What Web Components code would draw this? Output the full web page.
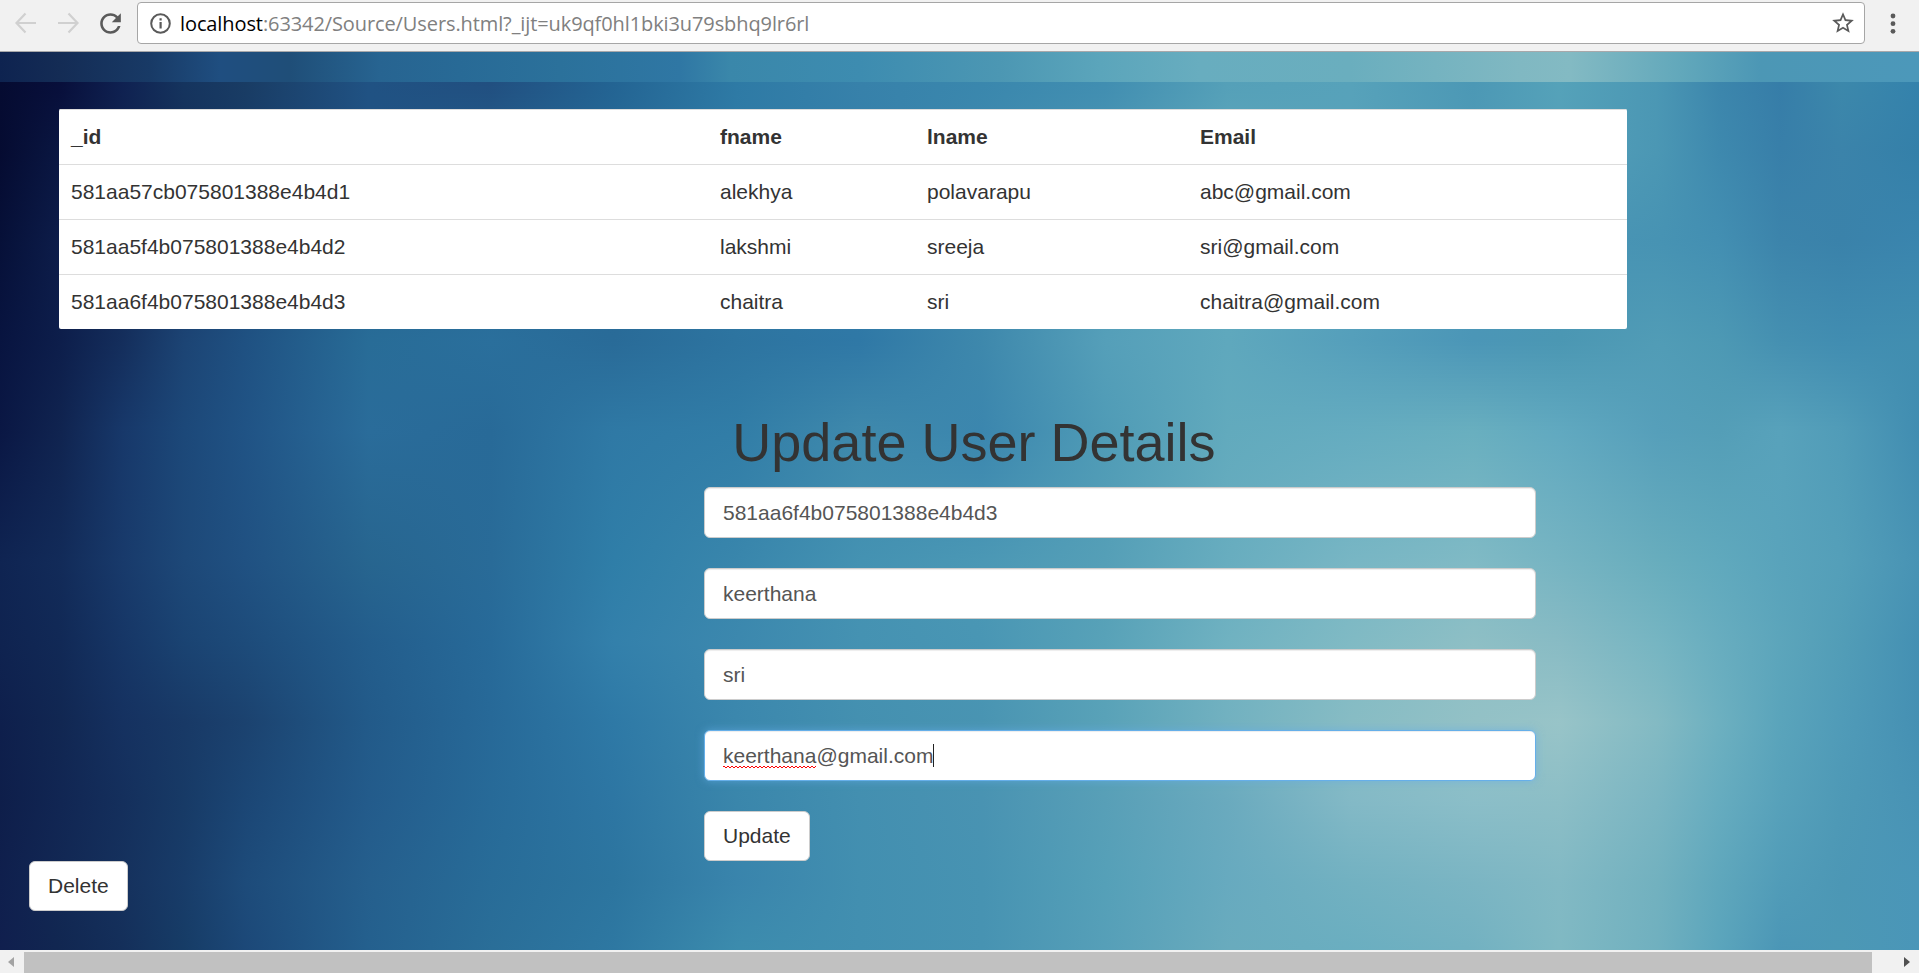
<!DOCTYPE html>
<html lang="en"><head><meta charset="utf-8"><title>Users</title>
<style>
html,body{margin:0;background:#fff;overflow:hidden}
body{font-family:"Liberation Sans",Arial,sans-serif;font-size:21px;line-height:30px;color:#333}
</style></head><body>
<browser-window>
<browser-toolbar slot="toolbar" host="localhost" path=":63342/Source/Users.html?_ijt=uk9qf0hl1bki3u79sbhq9lr6rl"></browser-toolbar>
<users-page>
<user-table></user-table>
<update-form heading="Update User Details">
<text-field>581aa6f4b075801388e4b4d3</text-field>
<text-field>keerthana</text-field>
<text-field>sri</text-field>
<text-field focused><misspelt-word>keerthana</misspelt-word>@gmail.com</text-field>
<push-button>Update</push-button>
</update-form>
<push-button class="delete">Delete</push-button>
</users-page>
<scroll-bar slot="scrollbar"></scroll-bar>
</browser-window>
<script>
const define=(name,html,setup)=>customElements.define(name,class extends HTMLElement{
  constructor(){super();this.attachShadow({mode:'open'}).innerHTML=html;}
  connectedCallback(){if(setup)setup(this,this.shadowRoot);}
});

define('browser-window',`<style>:host{display:grid;grid-template-rows:52px 898px 23px;width:1919px;height:973px;overflow:hidden}</style>
<slot name="toolbar"></slot><slot></slot><slot name="scrollbar"></slot>`);

define('browser-toolbar',`<style>
:host{display:flex;box-sizing:border-box;height:52px;background:#f1f1f1;border-bottom:1px solid #a8a8aa;padding:2px 0 0 11px}
svg{display:block;flex:none}
.nav{display:flex;gap:12px;height:42px;align-items:center;width:126px}
.box{box-sizing:border-box;display:flex;align-items:center;width:1728px;height:42px;border:1px solid #a6a6a6;border-radius:4px;background:#fff;padding:0 8px 0 11px}
.url{flex:1;margin-left:8px;padding-top:1px;font:20px/40px "Open Sans","Noto Sans",sans-serif;letter-spacing:-.1px;color:#808080;white-space:pre}
.url b{font-weight:400;color:#000}
.menu{margin:11px 0 0 24px}
</style>
<div class="nav">
<svg width="30" height="30" viewBox="0 0 30 30" fill="none" stroke="#d0d0d0" stroke-width="2.2"><path d="M25 15H6M14.5 5.5 5.5 15l9 9.500"/></svg>
<svg width="30" height="30" viewBox="0 0 30 30" fill="none" stroke="#d0d0d0" stroke-width="2.2"><path d="M5 15h19M15.500 5.500l9 9.500-9 9.500"/></svg>
<svg width="31" height="31" viewBox="0 0 24 24" fill="#5a5a5a"><path d="M17.650 6.350C16.200 4.900 14.210 4 12 4c-4.420 0-7.990 3.580-7.990 8s3.570 8 7.990 8c3.730 0 6.840-2.550 7.730-6h-2.080c-.82 2.330-3.040 4-5.650 4-3.310 0-6-2.690-6-6s2.690-6 6-6c1.660 0 3.140.69 4.220 1.780L13 11h7V4l-2.350 2.350z"/></svg>
</div>
<div class="box">
<svg width="23" height="23" viewBox="0 0 23 23"><circle cx="11.500" cy="11.500" r="9.300" fill="none" stroke="#5a5a5a" stroke-width="2"/><path d="M10.500 10h2.200v6.500h-2.200zM10.500 6.300h2.200v2.200h-2.200z" fill="#5a5a5a"/></svg>
<div class="url"><b></b><span></span></div>
<svg width="26" height="26" viewBox="0 0 24 24" fill="#5a5a5a"><path d="M22 9.240l-7.190-.62L12 2 9.190 8.630 2 9.240l5.460 4.730L5.820 21 12 17.270 18.180 21l-1.630-7.030L22 9.240zM12 15.400l-3.760 2.270 1-4.280-3.320-2.880 4.380-.38L12 6.100l1.710 4.040 4.380.38-3.320 2.880 1 4.280L12 15.400z"/></svg>
</div>
<svg class="menu" width="8" height="22" viewBox="0 0 8 22" fill="#5a5a5a"><circle cx="4" cy="3" r="2.400"/><circle cx="4" cy="10.700" r="2.400"/><circle cx="4" cy="18.300" r="2.400"/></svg>`,
(el,root)=>{root.querySelector('b').textContent=el.getAttribute('host');root.querySelector('.url span').textContent=el.getAttribute('path');});

/* Backdrop: a coarse colour mesh; MESH_X are column positions in 1/1563 of the width. */
const MESH_X=[0,50,100,150,200,300,400,500,600,700,800,900,1000,1100,1200,1270,1350,1400,1450,1500,1563];
const MESH=[
[0,'050b31 080f3b 0f2151 15345e 193c64 205283 214f80 236493 2e7aa5 3781aa 3a87ad 418eb1 55a0b8 57a2ba 4c98b5 55a2b9 4b97b4 3c86ac 367da8 3c88ab 3482ac'],
[68,'050b31 0a1742 10244f 153059 183c68 205283 245d8b 276996 2f7ba6 3580aa 3e89ae 4a95b3 5ca6bb 58a2ba 4e9ab6 55a0b9 4b97b4 3e89ae 387fa9 3b83aa 3480a9'],
[158,'061038 0d1d4a 122955 18396a 1d4a79 256391 286995 276996 2e78a4 317ba8 3d88ae 509bb7 5fa8bd 56a1bb 4b96b6 4995b5 4793b3 438fb2 3c84ab 3a82aa 3a85ae'],
[258,'081440 0d1e4b 142e5c 1c4474 1f5182 286c97 2a6f9c 296b98 2d74a0 2f78a6 3e88ac 559fb9 5fa8bd 559fbb 4b96b7 4b97b3 519cb6 4d99b4 4590b1 418db1 418eb0'],
[348,'0a1744 102450 17386a 1c4879 205385 2a6c9a 286a98 2f79a5 317da7 3f89ac 3b86ae 4f9bb6 62aabd 65acc0 69afbf 61a9c0 569fba 549eb7 58a2bb 519cb8 418db1'],
[478,'0f2452 122b59 183a6b 1d4878 205182 27658f 296b98 2f7ea8 3986ac 4492b2 4b98b5 559fb7 68adbf 78b6c4 80bac5 76b4c2 68adbd 60a9bd 59a3bb 549fb9 4893b4'],
[558,'0f2350 112956 163666 1a4372 1d4b7a 235d8c 276a99 3380ab 3c88ae 4592b2 4996b4 58a2b8 70b2c1 80bac4 8ebfc5 88bbc4 76b5c2 68adbf 5ca5bb 529db7 4490b3'],
[638,'0e1f4c 112752 153160 183966 1b426f 225a89 276998 2e79a6 3b87ad 4490b0 4994b2 59a2b8 72b1c0 87bcc4 93c1c6 98c4c8 83bac3 6db0c0 5aa4bb 509bb8 4590b3'],
[718,'0e1e4a 112653 142f5c 173a66 1b4675 235b8b 276a98 2d76a3 3a86ab 438fb0 4993b2 589fb7 6aaabe 83b9c6 8bbec8 8cbec6 7ab5c2 66acbf 57a1ba 4e99b6 4893b5'],
[798,'0f1f4d 122854 15315d 183c69 1d4b7a 255f8d 286c98 2c759f 3984ac 428fb0 4793b2 55a0b8 67aabf 72b1c1 7bb5c3 82b9c4 72b1bf 5fa7bc 519cb8 4c97b5 4a96b8'],
[868,'101f4e 112751 142f5a 163c66 1c4878 24608e 2a6e98 2e78a2 3c8cad 428fb0 4793b2 569fb8 69abbd 6aaec0 72b1c1 80b9c3 70b0bf 5ba5bc 4b96b6 4c98b5 4a96b8']
].map(([y,row])=>[y,row.split(' ').map(h=>[0,2,4].map(i=>parseInt(h.substr(i,2),16)))]);
function backdrop(height,step){
  const img=[],pos=[],size=[];
  for(let y=0;y<height;y+=step){
    let k=0;while(k<MESH.length-2&&MESH[k+1][0]<y)k++;
    const [y0,a]=MESH[k],[y1,b]=MESH[k+1];
    const t=Math.min(1,(y-y0)/(y1-y0));
    const stops=a.map((c,i)=>`rgb(${c.map((v,j)=>(v+(b[i][j]-v)*t).toFixed(1))}) ${(MESH_X[i]/15.63).toFixed(2)}%`);
    img.push(`linear-gradient(90deg,${stops})`);pos.push(`0 ${y}px`);size.push(`100% ${step}px`);
  }
  return {backgroundImage:img.join(','),backgroundPosition:pos.join(','),backgroundSize:size.join(','),backgroundRepeat:'no-repeat'};
}
define('users-page',`<style>
:host{display:block;height:898px;overflow:hidden}
.strip{height:30px;background:linear-gradient(90deg,#0e2350 0,#142c55 60px,#183a66 150px,#1f4e80 220px,#1f4e78 290px,#276491 380px,#286a96 460px,#2b719b 560px,#2f77a4 680px,#3a87aa 730px,#3d8cb0 860px,#4c97b3 1000px,#5ba5bb 1100px,#68adbf 1200px,#6aaebe 1350px,#80b8c2 1520px,#83bac3 1570px,#62a8bb 1680px,#4c97b5 1760px,#4c98ba 1919px)}
.main{height:868px;display:flex;flex-direction:column;align-items:flex-start;box-sizing:border-box;padding-top:27px}
::slotted(user-table){margin-left:59px}
::slotted(update-form){margin:83.600px 0 0 704px}
::slotted(.delete){margin-left:29px}
</style><div class="strip"></div><div class="main"><slot></slot></div>`,
(el,root)=>Object.assign(root.querySelector('.main').style,backdrop(868,4)));

define('user-table',`<style>
:host{display:block;width:1568px;background:#fff;border-radius:2px;overflow:hidden}
.row{display:grid;grid-template-columns:649px 207px 273px 1fr;border-top:1px solid #ddd}
.row>*{padding:12px;height:30px}
.head{font-weight:700}
</style>`,(el,root)=>{
  [['_id','fname','lname','Email'],
   ['581aa57cb075801388e4b4d1','alekhya','polavarapu','abc@gmail.com'],
   ['581aa5f4b075801388e4b4d2','lakshmi','sreeja','sri@gmail.com'],
   ['581aa6f4b075801388e4b4d3','chaitra','sri','chaitra@gmail.com']].forEach((r,i)=>{
    const row=document.createElement('div');row.className=i?'row':'row head';
    r.forEach(t=>{const c=document.createElement('div');c.textContent=t;row.append(c);});
    root.append(row);});
});

define('update-form',`<style>
:host{display:flex;flex-direction:column;align-items:flex-start;width:832px}
h1{font-size:54px;line-height:59.400px;font-weight:400;margin:0 0 15px;padding-left:28.300px;white-space:nowrap}
.fields{display:flex;flex-direction:column;align-items:flex-start;gap:30px;width:100%}
</style><h1></h1><div class="fields"><slot></slot></div>`,
(el,root)=>root.querySelector('h1').textContent=el.getAttribute('heading'));

define('text-field',`<style>
:host{display:flex;align-items:center;box-sizing:border-box;width:832px;height:51px;padding:0 18px;background:#fff;border:1px solid #ccc;border-radius:6px;color:#555;box-shadow:inset 0 1px 1px rgba(0,0,0,.075)}
:host([focused]){border-color:#66afe9;box-shadow:inset 0 1px 1px rgba(0,0,0,.075),0 0 8px rgba(102,175,233,.6)}
.caret{display:none;width:1px;height:23px;background:#222}
:host([focused]) .caret{display:block}
</style><div><slot></slot></div><i class="caret"></i>`);

define('misspelt-word',`<style>:host{display:inline-block;height:30px;background:
linear-gradient(45deg,transparent 35%,#f00 35% 65%,transparent 65%) 0 25px/4px 2px repeat-x,
linear-gradient(-45deg,transparent 35%,#f00 35% 65%,transparent 65%) 2px 25px/4px 2px repeat-x}</style><slot></slot>`);

define('push-button',`<style>
:host{display:block;box-sizing:border-box;height:50px;padding:9px 18px;background:#fff;border:1px solid #ccc;border-radius:6px;color:#333}
</style><slot></slot>`);

define('scroll-bar',`<style>
:host{display:flex;height:23px;background:#f1f1f1;align-items:flex-start}
.thumb{width:1848px;height:21px;margin-top:2px;background:#c1c1c1}
.l,.r{margin-top:7px;width:0;height:0;border:solid transparent;border-width:5.500px 0}
.l{border-right:6px solid #a3a3a3;margin-left:8px;margin-right:10px}
.r{border-left:6px solid #505050;margin-left:32px}
</style><i class="l"></i><div class="thumb"></div><i class="r"></i>`);
</script></body></html>
